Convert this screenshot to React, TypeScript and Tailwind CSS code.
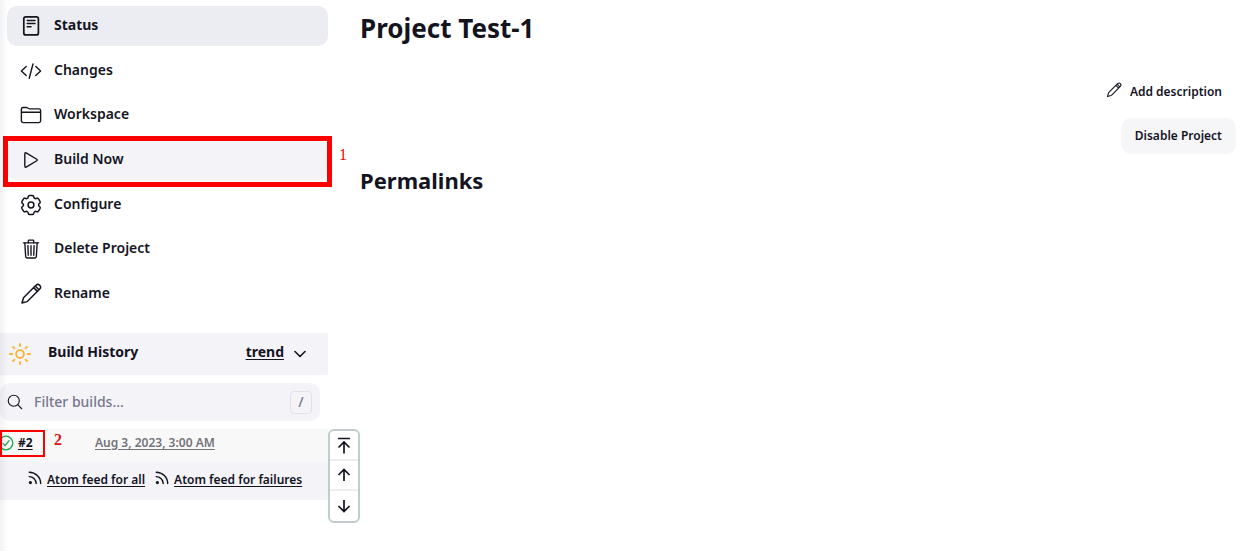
import type { ReactNode } from "react";
import {
  IoFolderOutline,
  IoPlayOutline,
  IoTrashOutline,
  IoSearchOutline,
} from "react-icons/io5";

function DocumentIcon() {
  return (
    <svg viewBox="0 0 22 22" className="size-[22px]" fill="none" stroke="currentColor" strokeLinecap="round" aria-hidden="true">
      <rect x="3.8" y="1.9" width="14.6" height="18" rx="2" strokeWidth="1.7" />
      <path d="M7.2 5.4h7.8M7.2 8.5h7.8M7.2 11.8h3.8" strokeWidth="1.5" />
    </svg>
  );
}

function CodeIcon() {
  return (
    <svg viewBox="0 0 22 22" className="size-[22px]" fill="none" stroke="currentColor" strokeWidth="1.4" strokeLinecap="round" strokeLinejoin="round" aria-hidden="true">
      <path d="M6.2 6.4L1.4 11l4.8 4.6M15.8 6.4l4.8 4.6-4.8 4.6M13 4L9.2 18.3" />
    </svg>
  );
}

function GearIcon() {
  return (
    <svg viewBox="0 0 22 22" className="size-[22px]" fill="none" stroke="currentColor" strokeWidth="1.5" strokeLinejoin="round" aria-hidden="true">
      <path d="M9.6 1.5h2.8Q13.5 1.5 13.7 2.5Q14 4 14.3 4.1L15.3 4.7Q15.7 4.8 16.9 4.3Q18 3.9 18.5 4.9L20 7.4Q20.6 8.5 19.8 9.2Q18.6 10 18.6 10.4V11.6Q18.6 12 19.8 12.8Q20.6 13.5 20 14.6L18.5 17.1Q18 18.1 16.9 17.7Q15.7 17.2 15.3 17.3L14.3 17.9Q14 18 13.7 19.5Q13.5 20.5 12.4 20.5H9.6Q8.5 20.5 8.3 19.5Q8 18 7.7 17.9L6.7 17.3Q6.3 17.2 5.1 17.7Q4 18.1 3.5 17.1L2 14.6Q1.4 13.5 2.2 12.8Q3.4 12 3.4 11.6V10.4Q3.4 10 2.2 9.2Q1.4 8.5 2 7.4L3.5 4.9Q4 3.9 5.1 4.3Q6.3 4.8 6.7 4.7L7.7 4.1Q8 4 8.3 2.5Q8.5 1.5 9.6 1.5Z" />
      <circle cx="11" cy="11" r="2.9" />
    </svg>
  );
}

function PencilIcon({ className }: { className: string }) {
  return (
    <svg viewBox="0 0 22 22" className={className} fill="none" stroke="currentColor" strokeWidth="1.5" strokeLinecap="round" strokeLinejoin="round" aria-hidden="true">
      <path d="M15.2 3L4 14.2Q3.6 14.6 3.4 15.2L2 20l4.8-1.4q.6-.2 1-.6L19 6.8zM15.2 3l.8-.7a2.6 2.6 0 0 1 3.7 3.7l-.7.8M13.6 4.6l3.8 3.8" />
    </svg>
  );
}

function SunIcon() {
  return (
    <svg viewBox="0 0 24 24" className="size-6 text-[#fcb32c]" fill="none" stroke="currentColor" strokeWidth="1.8" aria-hidden="true">
      <circle cx="12" cy="12" r="3.9" />
      <path d="M12 1.2v3.6M12 19.2v3.6M1.2 12h3.6M19.2 12h3.6M4.4 4.4l2.5 2.5M17.1 17.1l2.5 2.5M4.4 19.6l2.5-2.5M17.1 6.9l2.5-2.5" />
    </svg>
  );
}

function SuccessIcon() {
  return (
    <svg viewBox="0 0 16 16" className="-ml-0.5 size-4 text-[#1ea64b]" fill="none" stroke="currentColor" strokeWidth="1.3" strokeLinecap="round" strokeLinejoin="round" role="img" aria-label="Success">
      <circle cx="8" cy="8" r="6.8" />
      <path d="M5 8.4l2.1 2.2 4-4.9" />
    </svg>
  );
}

function FeedIcon() {
  return (
    <svg viewBox="0 0 14 14" className="mb-1 size-3.5 shrink-0" fill="none" stroke="currentColor" strokeWidth="1.4" strokeLinecap="round" aria-hidden="true">
      <circle cx="2.4" cy="11.6" r="1.6" fill="currentColor" stroke="none" />
      <path d="M1.2 5.6a7 7 0 0 1 7 7M1.2 1.2a11.4 11.4 0 0 1 11.5 11.4" />
    </svg>
  );
}

function ArrowIcon({ d }: { d: string }) {
  return (
    <svg viewBox="0 0 18 18" className="size-[18px]" fill="none" stroke="currentColor" strokeWidth="1.7" aria-hidden="true">
      <path d={d} />
    </svg>
  );
}

const tasks: { label: string; icon: ReactNode; style: string }[] = [
  { label: "Status", icon: <DocumentIcon />, style: "bg-[#ecedf3] font-bold" },
  { label: "Changes", icon: <CodeIcon />, style: "font-semibold" },
  { label: "Workspace", icon: <IoFolderOutline className="size-[22px]" />, style: "font-semibold" },
  { label: "Build Now", icon: <IoPlayOutline className="size-[22px]" />, style: "bg-[#f3f3f8] font-semibold" },
  { label: "Configure", icon: <GearIcon />, style: "font-semibold" },
  { label: "Delete Project", icon: <IoTrashOutline className="size-[22px]" />, style: "font-semibold" },
  { label: "Rename", icon: <PencilIcon className="size-[22px]" />, style: "font-semibold" },
];

const pages = [
  { label: "Newest builds", d: "M3 2.5h12M9 17.5V7M3.5 11.5L9 6l5.5 5.5" },
  { label: "Newer builds", d: "M9 15V4M3.5 9L9 3.5 14.5 9" },
  { label: "Older builds", d: "M9 3v11M3.5 9L9 14.5 14.5 9" },
];

function BuildHistory() {
  return (
    <section className="relative mt-[19px] text-[#14141f]">
      <div className="flex h-[42px] items-center bg-[#f3f3f8] pr-5 pl-2">
        <SunIcon />
        <h2 className="ml-4 pb-1 text-sm font-bold">Build History</h2>
        <a href="#trend" className="ml-auto pb-1 text-sm font-bold underline underline-offset-2">trend</a>
        <button type="button" aria-label="Collapse" className="ml-2 flex size-4 items-center justify-center">
          <svg viewBox="0 0 12 8" className="h-2 w-3" fill="none" stroke="currentColor" strokeWidth="1.6" strokeLinecap="round" strokeLinejoin="round">
            <path d="M1 1.5l5 5 5-5" />
          </svg>
        </button>
      </div>

      <label className="my-2 mr-2 flex h-[38px] items-center rounded-[10px] bg-[#f3f3f8] px-2">
        <IoSearchOutline className="-ml-0.5 size-[18px] shrink-0" aria-hidden="true" />
        <input
          type="text"
          aria-label="Filter builds"
          placeholder="Filter builds..."
          className="ml-2.5 min-w-0 flex-1 bg-transparent text-sm font-medium outline-none placeholder:text-[#77778f]"
        />
        <kbd className="flex h-[23px] w-[22px] items-center justify-center rounded border border-[#e1e1e8] font-['Noto_Sans',sans-serif] text-sm font-medium text-[#77778f]">/</kbd>
      </label>

      <div className="flex h-8 items-center border-t border-[#f3f3f5] bg-[#f8f8f8] pb-1.5 text-xs font-semibold">
        <SuccessIcon />
        <a href="#2" className="ml-1 w-[77px] font-bold underline underline-offset-2">#2</a>
        <a href="#2" className="text-[#73737a] underline underline-offset-2">Aug 3, 2023, 3:00 AM</a>
      </div>

      <div className="flex h-[39px] items-center gap-2.5 bg-[#f3f3f8] pr-7 pb-0.5 pl-7 text-xs font-semibold">
        <a href="#all" className="flex items-center gap-[5px] whitespace-nowrap underline underline-offset-2">
          <FeedIcon />
          Atom feed for all
        </a>
        <a href="#failures" className="flex items-center gap-[5px] whitespace-nowrap underline underline-offset-2">
          <FeedIcon />
          Atom feed for failures
        </a>
      </div>

      <div className="absolute top-24 left-full flex w-8 flex-col divide-y-2 divide-[#eeeeef] rounded-md border-2 border-[#c2cccf] bg-white">
        {pages.map((page) => (
          <button key={page.label} type="button" aria-label={page.label} className="flex h-[30px] items-center justify-center">
            <ArrowIcon d={page.d} />
          </button>
        ))}
      </div>

      <div className="pointer-events-none absolute top-[97px] left-0 h-[27px] w-[45px] border-2 border-[#fa0000]" />
      <span className="absolute top-[97px] left-[54px] font-['Liberation_Serif',serif] text-base leading-5 font-bold text-[#e01010]">2</span>
    </section>
  );
}

export default function App() {
  return (
    <div className="relative flex min-h-screen bg-white font-['Noto_Sans',sans-serif] text-[#14141f]">
      <aside className="w-[328px] shrink-0 pt-1.5">
        <nav className="flex h-[308px] flex-col justify-between pl-[7px]">
          {tasks.map((task) => (
            <div key={task.label} className="relative">
              <a href="#task" className={`flex h-10 items-center gap-3 rounded-[10px] pl-[13px] text-sm ${task.style}`}>
                {task.icon}
                <span className="pb-0.5">{task.label}</span>
              </a>
              {task.label === "Build Now" && (
                <>
                  <div className="pointer-events-none absolute -inset-x-1 -top-1 -bottom-[7px] border-5 border-[#ff0000]" />
                  <span className="absolute top-[5px] left-full ml-[11px] font-['Liberation_Serif',serif] text-base leading-5 text-[#fa0000]">1</span>
                </>
              )}
            </div>
          ))}
        </nav>
        <BuildHistory />
      </aside>

      <main className="min-w-0 flex-1 pt-2.5 pr-[18px] pl-8">
        <h1 className="text-[26px] leading-9 font-bold">Project Test-1</h1>
        <div className="mt-[30px] flex flex-col items-end gap-2.5">
          <a href="#description" className="flex h-8 items-center gap-2 pr-3.5 text-xs font-semibold">
            <PencilIcon className="mb-1 size-4" />
            Add description
          </a>
          <button type="button" className="h-9 rounded-[10px] bg-[#f6f6f9] px-3.5 text-xs font-semibold">Disable Project</button>
        </div>
        <h2 className="mt-2.5 text-[22px] leading-8 font-bold">Permalinks</h2>
      </main>

      <div className="pointer-events-none absolute inset-y-0 left-0 w-2 bg-linear-to-r from-black/5 to-transparent" />
    </div>
  );
}
